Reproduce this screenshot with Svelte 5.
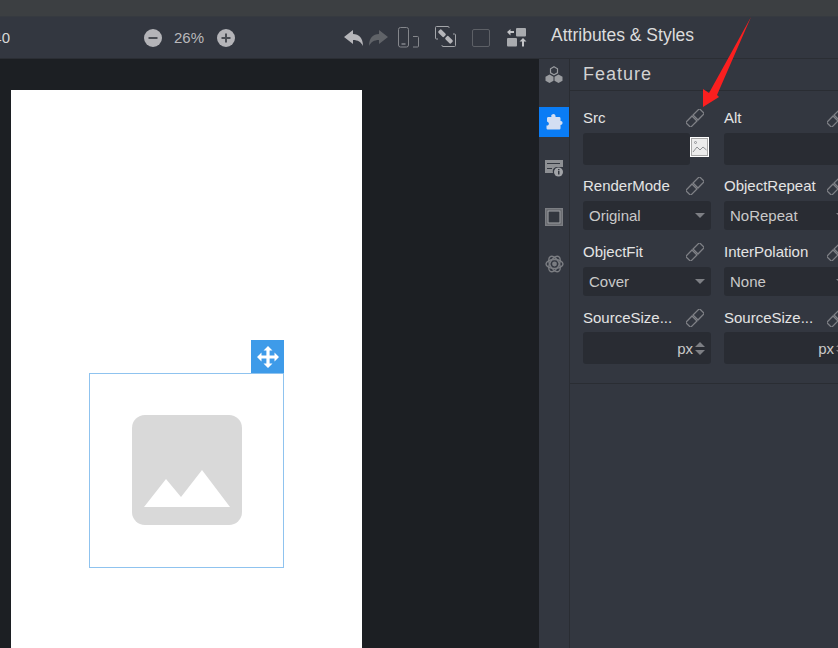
<script>
	let fields = [
		{ label: 'Src', type: 'image' },
		{ label: 'Alt', type: 'text' },
		{ label: 'RenderMode', type: 'select', value: 'Original' },
		{ label: 'ObjectRepeat', type: 'select', value: 'NoRepeat' },
		{ label: 'ObjectFit', type: 'select', value: 'Cover' },
		{ label: 'InterPolation', type: 'select', value: 'None' },
		{ label: 'SourceSize...', type: 'number' },
		{ label: 'SourceSize...', type: 'number' }
	];
</script>

<div class="app">
	<div class="strip"></div>

	<header class="toolbar">
		<div class="cut"><span>40</span></div>

		<div class="zoom">
			<svg width="18" height="18" viewBox="0 0 18 18">
				<circle cx="9" cy="9" r="9" fill="#b4b4b8" />
				<rect x="4.500" y="8" width="9" height="2" fill="#4a4d54" />
			</svg>
			<span>26%</span>
			<svg width="18" height="18" viewBox="0 0 18 18">
				<circle cx="9" cy="9" r="9" fill="#b4b4b8" />
				<rect x="4.500" y="8" width="9" height="2" fill="#4a4d54" />
				<rect x="8" y="4.500" width="2" height="9" fill="#4a4d54" />
			</svg>
		</div>

		<div class="tools">
			<svg class="undo" width="20" height="16" viewBox="0 0 20 16">
				<path d="M0 7 9 0v4c6 0 10 4 10 12-2-4-5-6-10-6v4z" fill="#b6b6ba" />
			</svg>
			<svg class="redo" width="20" height="16" viewBox="0 0 20 16">
				<path d="M19 7 10 0v4C4 4 0 8 0 16c2-4 5-6 10-6v4z" fill="#606368" />
			</svg>
			<svg class="device" width="22" height="21" viewBox="0 0 22 21" fill="none" stroke="#85878c" stroke-width="1">
				<rect x="0.500" y="0.500" width="10" height="19.500" rx="2" />
				<path d="M3.500 17h4" stroke-width="1.500" />
				<path d="M15 9.500h4.500a1 1 0 0 1 1 1v8.500a1 1 0 0 1-1 1H15" />
			</svg>
			<svg class="swaplink" width="21" height="21" viewBox="0 0 21 21" fill="none" stroke="#a3a5a9">
				<path d="M3 13H1.500a1 1 0 0 1-1-1V1.500a1 1 0 0 1 1-1H13a1 1 0 0 1 1 1V2" />
				<path d="M18 8h1.500a1 1 0 0 1 1 1v10.500a1 1 0 0 1-1 1H8a1 1 0 0 1-1-1V19" />
				<rect x="3" y="5" width="8" height="4.500" rx="1.500" fill="#b6b6ba" stroke="none" transform="rotate(45 7 7.250)" />
				<rect x="10" y="11.500" width="8" height="4.500" rx="1.500" fill="#b6b6ba" stroke="none" transform="rotate(45 14 13.750)" />
			</svg>
			<div class="square"></div>
			<svg class="layout" width="20" height="19" viewBox="0 0 20 19">
				<rect x="9" y="0" width="10" height="8.500" rx="1" fill="#a9abaf" />
				<rect x="0" y="10" width="10" height="8.500" rx="1" fill="#a9abaf" />
				<path d="M0 4 3.500 1v2H7v2H3.500v2.500zM19.500 13.500 16 10l-3.500 3.500h2.500v5h2v-5z" fill="#c4c5c8" />
			</svg>
		</div>

		<div class="title">Attributes &amp; Styles</div>
	</header>

	<main class="body">
		<section class="canvas">
			<div class="page">
				<div class="selected">
					<div class="handle">
						<svg width="22" height="22" viewBox="0 0 22 22" fill="#fff">
							<path d="M11 0l4.500 4.500H12.600V9.400h4.900V6.500L22 11l-4.500 4.500v-2.900h-4.900v4.900h2.900L11 22l-4.500-4.500h2.900v-4.900H4.500v2.900L0 11l4.500-4.500v2.900h4.900V4.500H6.500z" />
						</svg>
					</div>
					<svg width="110" height="110" viewBox="0 0 110 110">
						<rect width="110" height="110" rx="13" fill="#d9d9d9" />
						<path d="M12 92 34 64 49 82 70 55 98 92z" fill="#fff" />
					</svg>
				</div>
			</div>
		</section>

		<nav class="rail">
			<div class="rail-item">
				<svg width="18" height="17" viewBox="0 0 18 17">
					<path d="M9 .800l3.500 2v4L9 8.800l-3.500-2v-4z" fill="none" stroke="#9a9ca0" stroke-width="1.200" />
					<path d="M4.500 8.500l4 2.300v4l-4 2.200-4-2.200v-4zM13.500 8.500l4 2.300v4l-4 2.200-4-2.200v-4z" fill="#9a9ca0" />
				</svg>
			</div>
			<div class="rail-item active">
				<svg width="18" height="18" viewBox="0 0 18 18">
					<path d="M7 1.500c2-1.500 4 0 3.500 2.500H14c1 0 1.500.500 1.500 1.500V8c2.500-.500 3 3.500 0 4v3c0 1-.500 1.500-1.500 1.500H3c-1 0-1.500-.500-1.500-1.500v-2.500C4 13 5 9.500 2 8.500V5.500C2 4.500 2.500 4 3.500 4h3C6 3 6 2.200 7 1.500z" fill="#d3def2" />
				</svg>
			</div>
			<div class="rail-item">
				<svg width="18" height="18" viewBox="0 0 18 18">
					<path d="M0 1h18v7h-7a5 5 0 0 0-3 6H0zM2 4v1h13V4zM2 9v1h5V9z" fill="#8e9094" fill-rule="evenodd" />
					<circle cx="13.500" cy="13" r="4.500" fill="#a2a4a8" />
					<rect x="13" y="12" width="1.500" height="3.500" fill="#33373f" />
					<rect x="13" y="10" width="1.500" height="1.300" fill="#33373f" />
				</svg>
			</div>
			<div class="rail-item">
				<svg width="18" height="18" viewBox="0 0 18 18">
					<rect width="18" height="18" fill="#7c7e83" />
					<rect x="1.500" y="1.500" width="15" height="15" fill="#5a5d62" />
					<rect x="3" y="3" width="12" height="12" fill="#33373f" stroke="#a6a8ab" />
				</svg>
			</div>
			<div class="rail-item">
				<svg width="19" height="20" viewBox="0 0 19 20" fill="none" stroke="#7b7d82" stroke-width="1.400">
					<ellipse cx="9.500" cy="10" rx="8.500" ry="4.500" />
					<ellipse cx="9.500" cy="10" rx="8.500" ry="4.500" transform="rotate(60 9.500 10)" />
					<ellipse cx="9.500" cy="10" rx="8.500" ry="4.500" transform="rotate(120 9.500 10)" />
					<circle cx="9.500" cy="10" r="2.400" fill="#7b7d82" stroke="none" />
				</svg>
			</div>
		</nav>

		<aside class="panel">
			<h2>Feature</h2>
			<div class="grid">
				{#each fields as f}
					<div class="field">
						<div class="label">
							<span>{f.label}</span>
							<svg width="18" height="18" viewBox="0 0 18 18" fill="none" stroke="#7f8186" stroke-width="1.300">
								<rect x="0.800" y="9.200" width="9" height="7" transform="rotate(-45 5.300 12.700)" />
								<rect x="8.200" y="1.800" width="9" height="7" transform="rotate(-45 12.700 5.300)" />
							</svg>
						</div>
						<div class="control {f.type}">
							{#if f.type === 'select'}
								<span>{f.value}</span>
								<i class="caret"></i>
							{:else if f.type === 'number'}
								<span class="unit">px</span>
								<div class="spin"><i class="up"></i><i class="caret"></i></div>
							{:else if f.type === 'image'}
								<div class="pick">
									<svg width="19" height="20" viewBox="0 0 19 20" fill="none" stroke="#8f9194">
										<rect width="19" height="20" fill="#fff" stroke="none" />
										<rect x="1.500" y="1.500" width="16" height="17" fill="#ececec" stroke="#a8a8a8" />
										<path d="M3 15l4-5 3 3 3-3 3.500 3" />
										<circle cx="5.500" cy="5.500" r="1" />
									</svg>
								</div>
							{/if}
						</div>
					</div>
				{/each}
			</div>
		</aside>
	</main>

	<svg class="arrow" width="60" height="100" viewBox="0 0 60 100">
		<path d="M51 0 17 78 19 80 3 90 3 72 9 76z" fill="#fb1f1f" />
	</svg>
</div>

<style>
	:global(body) {
		overflow: hidden;
	}

	.app {
		position: relative;
		width: 838px;
		height: 648px;
		overflow: hidden;
		display: flex;
		flex-direction: column;
		background: #1c1f23;
		font-family: 'Liberation Sans', Arial, sans-serif;
	}

	.strip {
		height: 17px;
		background: #3c3f42;
		border-bottom: 1px solid #363a40;
		box-sizing: border-box;
		flex: none;
	}

	.toolbar {
		height: 42px;
		flex: none;
		box-sizing: border-box;
		display: flex;
		align-items: center;
		background: #333740;
		border-bottom: 1px solid #2b2e34;
		color: #c8c8c8;
	}

	.cut {
		width: 10px;
		display: flex;
		justify-content: flex-end;
		overflow: hidden;
		font-size: 15px;
		color: #d8d8d8;
	}

	.zoom {
		display: flex;
		align-items: center;
		margin-left: 134px;
		font-size: 15px;
		color: #b9b9bc;
	}

	.zoom span {
		margin: 0 13px 0 12px;
	}

	.tools {
		display: flex;
		align-items: center;
		margin-left: 109px;
	}

	.redo {
		margin-left: 5px;
	}

	.device {
		margin-left: 9px;
	}

	.swaplink {
		margin-left: 15px;
		margin-top: -3px;
	}

	.square {
		width: 18px;
		height: 18px;
		box-sizing: border-box;
		margin-left: 16px;
		border: 1px solid #5d6066;
		border-radius: 2px;
	}

	.layout {
		margin-left: 17px;
		margin-top: -1px;
	}

	.title {
		margin-left: 24px;
		margin-top: -4px;
		font-size: 17.500px;
		color: #dcdcdc;
		white-space: nowrap;
	}

	.body {
		flex: 1;
		display: flex;
		min-height: 0;
	}

	.canvas {
		width: 539px;
		flex: none;
		box-sizing: border-box;
		padding: 31px 0 0 11px;
	}

	.page {
		width: 351px;
		height: 600px;
		box-sizing: border-box;
		padding: 283px 0 0 78px;
		background: #fff;
	}

	.selected {
		position: relative;
		width: 195px;
		height: 195px;
		box-sizing: border-box;
		border: 1px solid #8fc3ef;
		display: flex;
		align-items: center;
		justify-content: center;
	}

	.selected > svg {
		margin-top: -1px;
	}

	.handle {
		position: absolute;
		right: -1px;
		top: -34px;
		width: 33px;
		height: 33px;
		background: #3e9be9;
		display: flex;
		align-items: center;
		justify-content: center;
	}

	.rail {
		width: 31px;
		flex: none;
		box-sizing: border-box;
		background: #333740;
		border-right: 1px solid #2a2d33;
		display: flex;
		flex-direction: column;
	}

	.rail-item {
		height: 30px;
		flex: none;
		display: flex;
		align-items: center;
		justify-content: center;
	}

	.rail-item:nth-child(1) {
		margin-bottom: 18px;
	}

	.rail-item:nth-child(2) {
		margin-bottom: 16px;
	}

	.rail-item:nth-child(3) {
		margin-bottom: 19px;
	}

	.rail-item:nth-child(4) {
		margin-bottom: 17px;
	}

	.rail-item.active {
		background: #0a7cf5;
	}

	.panel {
		flex: 1;
		min-width: 0;
		background: #333740;
		overflow: hidden;
	}

	h2 {
		margin: 0;
		height: 32px;
		box-sizing: border-box;
		padding: 5px 0 0 13px;
		font-size: 18px;
		line-height: 20px;
		font-weight: 400;
		letter-spacing: 1px;
		color: #d2d2d2;
		border-bottom: 1px solid #2a2d33;
	}

	.grid {
		display: grid;
		grid-template-columns: 128px 128px;
		column-gap: 13px;
		row-gap: 12px;
		padding: 17px 0 19px 13px;
		border-bottom: 1px solid #2a2d33;
		width: 284px;
		box-sizing: content-box;
	}

	.label {
		height: 20px;
		margin-bottom: 5px;
		display: flex;
		align-items: center;
		justify-content: space-between;
		font-size: 15px;
		color: #e4e4e4;
	}

	.label span {
		margin-top: -2px;
	}

	.label svg {
		margin-right: 7px;
	}

	.control {
		position: relative;
		height: 29px;
		box-sizing: border-box;
		padding: 0 6px;
		display: flex;
		align-items: center;
		justify-content: space-between;
		background: #292c33;
		border-radius: 3px;
		font-size: 15px;
		color: #c9c9c9;
	}

	.control.image,
	.control.text {
		height: 32px;
		margin-bottom: -1px;
	}

	.control.image {
		width: 107px;
	}

	.control.number {
		height: 32px;
		margin-top: -1px;
		justify-content: flex-end;
	}

	.pick {
		position: absolute;
		left: 107px;
		top: 4px;
		height: 20px;
	}

	.caret {
		display: block;
		width: 0;
		height: 0;
		border-left: 5px solid transparent;
		border-right: 5px solid transparent;
		border-top: 5px solid #7d7f84;
	}

	.unit {
		margin-right: 2px;
	}

	.spin {
		display: flex;
		flex-direction: column;
		gap: 3px;
	}

	.up {
		display: block;
		width: 0;
		height: 0;
		border-left: 5px solid transparent;
		border-right: 5px solid transparent;
		border-bottom: 5px solid #7d7f84;
	}

	.arrow {
		position: absolute;
		left: 700px;
		top: 17px;
		pointer-events: none;
	}
</style>
